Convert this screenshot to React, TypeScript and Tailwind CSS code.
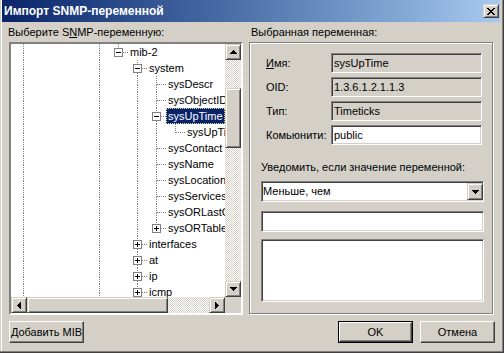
import type { ReactNode } from 'react';

type Line = 'none' | 'pipe' | 'tee' | 'elbow';

interface TreeRow {
  lines: Line[];
  box?: '+' | '-';
  text: string;
  selected?: boolean;
}

const base: Line[] = ['pipe', 'none', 'none', 'none', 'pipe'];
const sys: Line[] = [...base, 'none', 'pipe'];

const rows: TreeRow[] = [
  { lines: [...base, 'elbow'], box: '-', text: 'mib-2' },
  { lines: [...base, 'none', 'tee'], box: '-', text: 'system' },
  { lines: [...sys, 'tee'], text: 'sysDescr' },
  { lines: [...sys, 'tee'], text: 'sysObjectID' },
  { lines: [...sys, 'tee'], box: '-', text: 'sysUpTime', selected: true },
  { lines: [...sys, 'pipe', 'elbow'], text: 'sysUpTime' },
  { lines: [...sys, 'tee'], text: 'sysContact' },
  { lines: [...sys, 'tee'], text: 'sysName' },
  { lines: [...sys, 'tee'], text: 'sysLocation' },
  { lines: [...sys, 'tee'], text: 'sysServices' },
  { lines: [...sys, 'tee'], text: 'sysORLastChange' },
  { lines: [...sys, 'elbow'], box: '+', text: 'sysORTable' },
  { lines: [...base, 'none', 'tee'], box: '+', text: 'interfaces' },
  { lines: [...base, 'none', 'tee'], box: '+', text: 'at' },
  { lines: [...base, 'none', 'tee'], box: '+', text: 'ip' },
  { lines: [...base, 'none', 'tee'], box: '+', text: 'icmp' },
  { lines: [...base, 'none', 'tee'], box: '+', text: 'tcp' },
];

const raised =
  'border border-t-[#d4d0c8] border-l-[#d4d0c8] border-r-[#404040] border-b-[#404040] bg-[#d4d0c8] shadow-[inset_1px_1px_0_#ffffff,inset_-1px_-1px_0_#808080]';
const button =
  'border border-t-white border-l-white border-r-[#404040] border-b-[#404040] bg-[#d4d0c8] shadow-[inset_-1px_-1px_0_#808080]';
const sunken =
  'border border-t-[#808080] border-l-[#808080] border-r-white border-b-white shadow-[inset_1px_1px_0_#404040,inset_-1px_-1px_0_#d4d0c8]';
const hatch =
  'bg-[image:repeating-conic-gradient(#d4d0c8_0%_25%,#ffffff_0%_50%)] bg-[length:2px_2px]';

const arrows = {
  up: { w: 7, h: 4, d: 'M3 0h1v1H3z M2 1h3v1H2z M1 2h5v1H1z M0 3h7v1H0z' },
  down: { w: 7, h: 4, d: 'M0 0h7v1H0z M1 1h5v1H1z M2 2h3v1H2z M3 3h1v1H3z' },
  left: { w: 4, h: 7, d: 'M3 0h1v7H3z M2 1h1v5H2z M1 2h1v3H1z M0 3h1v1H0z' },
  right: { w: 4, h: 7, d: 'M0 0h1v7H0z M1 1h1v5H1z M2 2h1v3H2z M3 3h1v1H3z' },
};

function Arrow({ dir }: { dir: keyof typeof arrows }) {
  const a = arrows[dir];
  return (
    <svg width={a.w} height={a.h} viewBox={`0 0 ${a.w} ${a.h}`} shapeRendering="crispEdges">
      <path d={a.d} fill="#000" />
    </svg>
  );
}

function ScrollButton({ dir, className = '' }: { dir: keyof typeof arrows; className?: string }) {
  return (
    <div className={`flex h-4 w-4 shrink-0 items-center justify-center ${raised} ${className}`}>
      <Arrow dir={dir} />
    </div>
  );
}

function Expander({ sign }: { sign: '+' | '-' }) {
  return (
    <div className="absolute left-[5px] top-[4px] h-[9px] w-[9px] border border-[#808080] bg-white">
      <svg width="7" height="7" viewBox="0 0 7 7" shapeRendering="crispEdges" className="block">
        <rect x="1" y="3" width="5" height="1" fill="#000" />
        {sign === '+' && <rect x="3" y="1" width="1" height="5" fill="#000" />}
      </svg>
    </div>
  );
}

function Cell({ line, box }: { line: Line; box?: '+' | '-' }) {
  const dot = 'border-dotted border-[#808080]';
  const up = line !== 'none';
  const down = line === 'pipe' || line === 'tee';
  const across = line === 'tee' || line === 'elbow';
  return (
    <div className="relative grid h-4 w-[19px] shrink-0 grid-cols-[10px_9px] grid-rows-[9px_7px]">
      <div className={up ? `border-r ${dot}` : ''} />
      <div className={across ? `border-b ${dot}` : ''} />
      <div className={down ? `border-r ${dot}` : ''} />
      <div />
      {box && <Expander sign={box} />}
    </div>
  );
}

function Tree() {
  return (
    <div className={`flex h-[273px] w-[234px] flex-col bg-white ${sunken} border-2 border-t-[#808080] border-l-[#808080] border-r-white border-b-white shadow-none`}>
      <div className="flex min-h-0 flex-1">
        <div className="flex min-w-0 flex-1 flex-col overflow-hidden pl-[3px]">
          {rows.map((r, i) => (
            <div key={i} className="flex h-4 shrink-0 items-center whitespace-nowrap">
              {r.lines.map((l, j) => (
                <Cell key={j} line={l} box={j === r.lines.length - 1 ? r.box : undefined} />
              ))}
              <span
                className={`h-4 px-[2px] leading-4 ${
                  r.selected
                    ? 'bg-[#0a246a] text-white outline-1 outline-dotted outline-[#e8d890] outline-offset-[-1px]'
                    : ''
                }`}
              >
                {r.text}
              </span>
            </div>
          ))}
        </div>
        <div className="flex w-4 flex-col">
          <ScrollButton dir="up" />
          <div className={`h-[28px] ${hatch}`} />
          <div className={`h-[60px] ${raised}`} />
          <div className={`flex-1 ${hatch}`} />
          <ScrollButton dir="down" />
        </div>
      </div>
      <div className="flex h-4">
        <ScrollButton dir="left" />
        <div className={`w-[141px] ${raised}`} />
        <div className={`flex-1 ${hatch}`} />
        <ScrollButton dir="right" />
        <div className="w-4 bg-[#d4d0c8]" />
      </div>
    </div>
  );
}

function Field({ value, readOnly }: { value: string; readOnly?: boolean }) {
  return (
    <div
      className={`flex h-5 w-[151px] items-center pl-[2px] ${sunken} ${
        readOnly ? 'bg-[#d4d0c8]' : 'bg-white'
      }`}
    >
      {value}
    </div>
  );
}

function FieldRow({ label, children }: { label: ReactNode; children: ReactNode }) {
  return (
    <div className="flex h-5 items-center">
      <div className="w-[65px]">{label}</div>
      {children}
    </div>
  );
}

function CloseGlyph() {
  return (
    <svg width="8" height="7" viewBox="0 0 8 7" shapeRendering="crispEdges">
      <path
        d="M0 0h2v1H0z M6 0h2v1H6z M1 1h2v1H1z M5 1h2v1H5z M2 2h4v1H2z M3 3h2v1H3z M2 4h4v1H2z M1 5h2v1H1z M5 5h2v1H5z M0 6h2v1H0z M6 6h2v1H6z"
        fill="#000"
      />
    </svg>
  );
}

export default function App() {
  return (
    <div className="flex h-[353px] w-[504px] flex-col overflow-hidden bg-[#d4d0c8] font-['Liberation_Sans',Arial,sans-serif] text-[11px] text-black shadow-[inset_-1px_-1px_0_#404040,inset_-2px_-2px_0_#808080,inset_1px_0_0_#d4d0c8,inset_2px_0_0_#ffffff]">
      <div className="ml-[2px] mr-[4px] flex h-[22px] shrink-0 items-center justify-between bg-linear-to-r from-[#0a246a] to-[#a6caf0] pl-[2px] pr-px">
        <span className="text-[12px] font-bold text-white">Импорт SNMP-переменной</span>
        <div className={`flex h-[14px] w-4 items-center justify-center ${raised}`}>
          <CloseGlyph />
        </div>
      </div>

      <div className="flex pt-[4px]">
        <div className="ml-[8px] flex flex-col">
          <div className="h-4 leading-[13px]">
            Выберите S<span className="underline">N</span>MP-переменную:
          </div>
          <div className="ml-px">
            <Tree />
          </div>
        </div>

        <div className="ml-[6px] flex flex-col">
          <div className="ml-[2px] h-4 leading-[13px]">Выбранная переменная:</div>
          <div className="flex h-[272px] w-[244px] flex-col border border-[#808080] shadow-[1px_1px_0_#ffffff,inset_1px_1px_0_#ffffff]">
            <div className="flex flex-col gap-1 pl-[16px] pt-[10px]">
              <FieldRow
                label={
                  <>
                    <span className="underline">И</span>мя:
                  </>
                }
              >
                <Field value="sysUpTime" readOnly />
              </FieldRow>
              <FieldRow label="OID:">
                <Field value="1.3.6.1.2.1.1.3" readOnly />
              </FieldRow>
              <FieldRow label="Тип:">
                <Field value="Timeticks" readOnly />
              </FieldRow>
              <FieldRow label="Комьюнити:">
                <Field value="public" />
              </FieldRow>
            </div>

            <div className="flex flex-col pl-[11px]">
              <div className="mt-[16px] h-[13px] leading-[13px]">Уведомить, если значение переменной:</div>
              <div className={`mt-[7px] flex h-[21px] w-[223px] items-center bg-white pl-[1px] ${sunken}`}>
                <span className="flex-1">Меньше, чем</span>
                <div className={`flex h-[17px] w-4 items-center justify-center ${raised}`}>
                  <Arrow dir="down" />
                </div>
              </div>
              <div className={`mt-[9px] h-[21px] w-[223px] bg-white ${sunken}`} />
              <div className={`mt-[7px] h-[63px] w-[223px] bg-white ${sunken}`} />
            </div>
          </div>
        </div>
      </div>

      <div className="mt-[6px] flex items-center justify-between px-[9px]">
        <div className={`flex h-[22px] w-[75px] items-center justify-center ${button}`}>
          <span>
            <span className="underline">Д</span>обавить MIB
          </span>
        </div>
        <div className="flex gap-[7px]">
          <div className="h-[22px] w-[75px] border border-black">
            <div className={`flex h-full w-full items-center justify-center ${button}`}>OK</div>
          </div>
          <div className={`flex h-[22px] w-[75px] items-center justify-center ${button}`}>Отмена</div>
        </div>
      </div>
    </div>
  );
}
